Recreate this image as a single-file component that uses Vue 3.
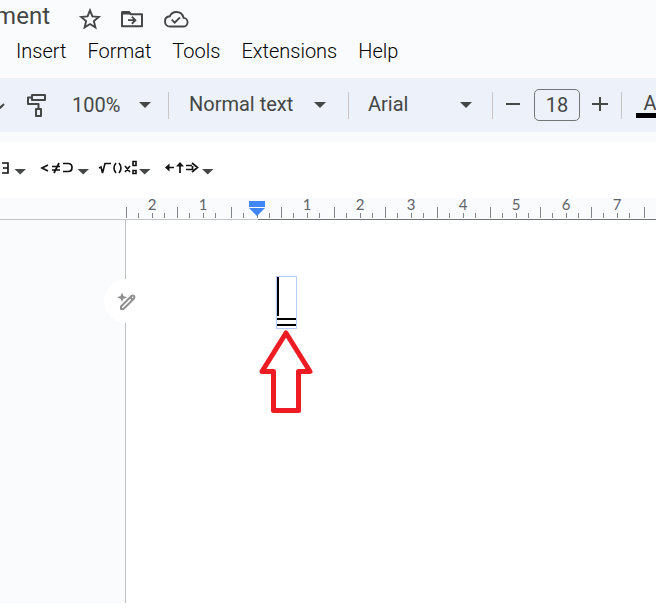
<script setup>
import { ref } from 'vue'

const zoom = ref('100%')
const paragraph = ref('Normal text')
const font = ref('Arial')
const size = ref(18)

const menus = ['Insert', 'Format', 'Tools', 'Extensions', 'Help']

const major = [126, 177, 231, 281, 334, 385, 437, 490, 540, 591, 644]
const labels = ['2', '1', '', '1', '2', '3', '4', '5', '6', '7']
const minor = major.flatMap((x) => [x + 12, x + 26, x + 38])
</script>

<template>
  <div class="app">
    <header>
      <div class="title-row">
        <span class="title">ment</span>
        <button class="star" aria-label="Star">
          <svg width="22" height="22" viewBox="0 0 22 22"><path d="M11 2.4l2.4 6 6.4.5-4.9 4.2 1.5 6.3-5.4-3.4-5.4 3.4 1.5-6.3-4.9-4.2 6.4-.5z" fill="none" stroke="#444746" stroke-width="1.9" /></svg>
        </button>
        <button aria-label="Move">
          <svg width="24" height="22" viewBox="0 0 24 22"><path d="M2 4.2h7l2 2h11v12H2z" fill="none" stroke="#444746" stroke-width="2" stroke-linejoin="round" /><path d="M2 3h7.2l2.3 3.4H2zM8 11.3h5.2l-2-2 1.3-1.3 4.2 4.2-4.2 4.2-1.3-1.3 2-2H8z" fill="#444746" /></svg>
        </button>
        <button aria-label="Document status">
          <svg width="26" height="22" viewBox="0 0 26 22"><path d="M7 18.5h13a4.3 4.3 0 0 0 .5-8.6C19.8 6 17 4 13.3 4 10.3 4 8 5.5 6.8 8.3 3.8 8.6 2 10.7 2 13.4c0 3 2.2 5.1 5 5.1z" fill="none" stroke="#444746" stroke-width="1.9" /><path d="M8.7 11.7l3 3 5.3-5.3" fill="none" stroke="#444746" stroke-width="1.9" /></svg>
        </button>
      </div>
      <nav>
        <button v-for="m in menus" :key="m">{{ m }}</button>
      </nav>
    </header>

    <div class="toolbar" role="toolbar">
      <button class="redo" aria-label="More"><svg width="6" height="10" viewBox="0 0 6 10"><path d="M-1 6l1.5 1.5L4 4" fill="none" stroke="#444746" stroke-width="2" /></svg></button>
      <button class="paint" aria-label="Paint format">
        <svg width="22" height="26" viewBox="0 0 22 26"><path d="M6 3h13v5H6zM6 5.5H2V12h10.5v5M10 17h5v7h-5z" fill="none" stroke="#444746" stroke-width="2" stroke-linejoin="round" /></svg>
      </button>
      <label class="picker zoom">
        <select v-model="zoom" aria-label="Zoom"><option>100%</option></select>
        <svg width="12" height="6" viewBox="0 0 12 6"><path d="M0 0h12L6 6z" /></svg>
      </label>
      <i class="rule"></i>
      <label class="picker style">
        <select v-model="paragraph" aria-label="Styles"><option>Normal text</option></select>
        <svg width="12" height="6" viewBox="0 0 12 6"><path d="M0 0h12L6 6z" /></svg>
      </label>
      <i class="rule"></i>
      <label class="picker font">
        <select v-model="font" aria-label="Font"><option>Arial</option></select>
        <svg width="12" height="6" viewBox="0 0 12 6"><path d="M0 0h12L6 6z" /></svg>
      </label>
      <i class="rule"></i>
      <button class="step" aria-label="Decrease font size" @click="size--"><svg width="16" height="16" viewBox="0 0 16 16"><path d="M1 7h14" stroke="#444746" stroke-width="2" /></svg></button>
      <input v-model="size" class="size" aria-label="Font size" />
      <button class="step" aria-label="Increase font size" @click="size++"><svg width="16" height="16" viewBox="0 0 16 16"><path d="M0 7h16M8 0v14" stroke="#444746" stroke-width="2" /></svg></button>
      <i class="rule"></i>
      <button class="color" aria-label="Text color">A</button>
    </div>

    <div class="equations" role="toolbar">
      <button aria-label="Miscellaneous operations">
        <svg width="30" height="20" viewBox="0 0 30 20"><path d="M2 5h6v10H2M3 10h5" fill="none" stroke="#111" stroke-width="1.6" /><path d="M14.5 11H26l-5.800 5.500z" fill="#444746" /></svg>
      </button>
      <button aria-label="Relations">
        <svg width="50" height="20" viewBox="0 0 50 20"><path d="M9 7L3 10l6 3M13 8.500h8M13 12h8M20 5l-5 10M24 5.500h5q4 0 4 4t-4 4h-5" fill="none" stroke="#111" stroke-width="1.7" /><path d="M38.500 11H50l-5.800 5.500z" fill="#444746" /></svg>
      </button>
      <button aria-label="Math operations">
        <svg width="58" height="20" viewBox="0 0 58 20"><path d="M1 10l2-1 1.500 6L7 5.500h6M18 5q-4 5 0 10M21 5q4 5 0 10M27 8l5 6M32 8l-5 6" fill="none" stroke="#111" stroke-width="1.6" /><path d="M35 3.500h3v4h-3zM35 12.500h3v3h-3z" fill="none" stroke="#111" stroke-width="1.6" /><path d="M41 11h11.500l-5.800 5.500z" fill="#444746" /></svg>
      </button>
      <button aria-label="Arrows">
        <svg width="54" height="20" viewBox="0 0 54 20"><path d="M3 9.500h6M15 6v9M21 7.500h6M21 11.500h6M27 5l5.500 4.500L27 14M27.500 8v4" fill="none" stroke="#111" stroke-width="1.7" /><path d="M0 9.500l4.500-4v8zM11 8.500L15 4l4 4.500z" fill="#111" /><path d="M37 11h11.500l-5.800 5.500z" fill="#444746" /></svg>
      </button>
    </div>

    <div class="ruler">
      <svg width="100%" height="22">
        <path d="M0 21.500H258" stroke="#c4c7c5" />
        <line x1="258" y1="21.500" x2="100%" y2="21.500" stroke="#70757a" />
        <path v-for="x in major" :key="'a' + x" :d="`M${x + 0.5} 9v11`" stroke="#80868b" />
        <path v-for="x in minor" :key="'b' + x" :d="`M${x + 0.5} 15v5`" stroke="#80868b" />
        <text v-for="(t, i) in labels" :key="i" :x="major[i] + 26" y="12" text-anchor="middle">{{ t }}</text>
        <path d="M249 3h16v6h-16zM249 10h16l-8 8z" fill="#4285f4" />
      </svg>
    </div>

    <main>
      <aside>
        <button class="edit" aria-label="Help me write">
          <svg width="22" height="22" viewBox="0 0 22 22"><path d="M5 15.500L15.500 5q1.500-1 2.500 0t0 2.500L7.500 18H5z" fill="none" stroke="#8f8f8f" stroke-width="2" stroke-linejoin="round" /><path d="M14 6l3 3" stroke="#8f8f8f" stroke-width="2" /><path d="M6 1.500L7.400 5 11 6.300 7.400 7.700 6 11 4.600 7.700 1 6.300 4.600 5z" fill="#8f8f8f" /></svg>
        </button>
      </aside>
      <section class="page">
        <div class="equation">
          <span class="caret"></span>
          <span class="bar"></span>
          <span class="bar"></span>
        </div>
        <svg class="pointer" width="56" height="86" viewBox="0 0 56 86"><path d="M28 4l24 38.500H40.500v39h-25v-39H4z" fill="none" stroke="#ed1c24" stroke-width="5" stroke-linejoin="round" /></svg>
      </section>
    </main>
  </div>
</template>

<style>
body {
  margin: 0;
  background: #fff;
}
</style>

<style scoped>
.app {
  display: flex;
  flex-direction: column;
  box-sizing: border-box;
  min-height: 100vh;
  padding-bottom: 12px;
  overflow: hidden;
  color: #444746;
  font-family: Roboto, "Liberation Sans", sans-serif;
  font-size: 20px;
}
button {
  flex: none;
  padding: 0;
  border: 0;
  background: none;
  color: inherit;
  font: inherit;
}
svg {
  display: block;
  flex: none;
  overflow: visible;
}
header {
  height: 78px;
  background: #f9fbfd;
}
.title-row {
  display: flex;
  align-items: center;
  gap: 19px;
  height: 38px;
}
.title {
  display: flex;
  justify-content: flex-end;
  width: 50px;
  padding-bottom: 6px;
  font-size: 24px;
  line-height: 32px;
}
.star {
  margin-left: 10px;
}
nav {
  display: flex;
  gap: 21px;
  padding-left: 16px;
  color: #000;
  font-weight: 300;
  line-height: 26px;
}
.toolbar {
  display: flex;
  align-items: center;
  height: 54px;
  background: #edf2fa;
  overflow: hidden;
}
.redo {
  margin-right: 20px;
}
.paint {
  margin-right: 24px;
}
.picker {
  display: grid;
  flex: none;
  align-items: center;
}
.picker > * {
  grid-area: 1 / 1;
}
.picker svg {
  justify-self: end;
  fill: #444746;
  pointer-events: none;
}
select {
  width: 100%;
  height: 32px;
  padding: 0 0 2px;
  border: 0;
  appearance: none;
  background: none;
  color: inherit;
  font: inherit;
}
.zoom {
  width: 79px;
  margin-right: 17px;
}
.zoom select {
  padding: 0;
}
.style {
  width: 137px;
  margin: 0 22px 0 20px;
}
.font {
  width: 104px;
  margin: 0 20px 0 19px;
}
.rule {
  flex: none;
  width: 1px;
  height: 27px;
  background: #c7c7c7;
}
.step {
  margin: 0 13px 0 12px;
}
.size {
  box-sizing: border-box;
  flex: none;
  width: 46px;
  height: 32px;
  padding: 0;
  border: 1px solid #747775;
  border-radius: 5px;
  background: none;
  color: inherit;
  font: inherit;
  text-align: center;
}
.color {
  box-sizing: border-box;
  width: 28px;
  height: 26px;
  margin-left: 14px;
  border-bottom: 5px solid #000;
  line-height: 20px;
}
.equations {
  display: flex;
  align-items: center;
  gap: 9px;
  height: 52px;
  padding-bottom: 4px;
  border-top: 10px solid #f9fbfd;
}
.ruler {
  height: 22px;
  background: #f9fbfd;
}
.ruler text {
  fill: #5f6368;
  font-family: Lato, sans-serif;
  font-size: 15px;
}
main {
  display: flex;
  flex: 1;
}
aside {
  position: relative;
  flex: none;
  width: 125px;
  border-right: 1px solid #c0c0c0;
  background: #f9fbfd;
}
.edit {
  position: absolute;
  top: 59px;
  right: -23px;
  display: grid;
  place-items: center;
  box-sizing: border-box;
  width: 44px;
  height: 44px;
  padding: 2px 0 0 2px;
  border-radius: 50%;
  background: #fff;
}
.page {
  flex: 1;
  padding: 56px 0 0 150px;
}
.equation {
  display: flex;
  flex-direction: column;
  box-sizing: border-box;
  width: 21px;
  height: 53px;
  border: 1px solid #b8cbfb;
}
.caret {
  width: 2px;
  height: 39px;
  background: #000;
}
.bar {
  height: 2px;
  margin-top: 2px;
  background: #000;
}
.bar + .bar {
  margin-top: 4px;
}
.pointer {
  margin-left: -18px;
}
</style>
